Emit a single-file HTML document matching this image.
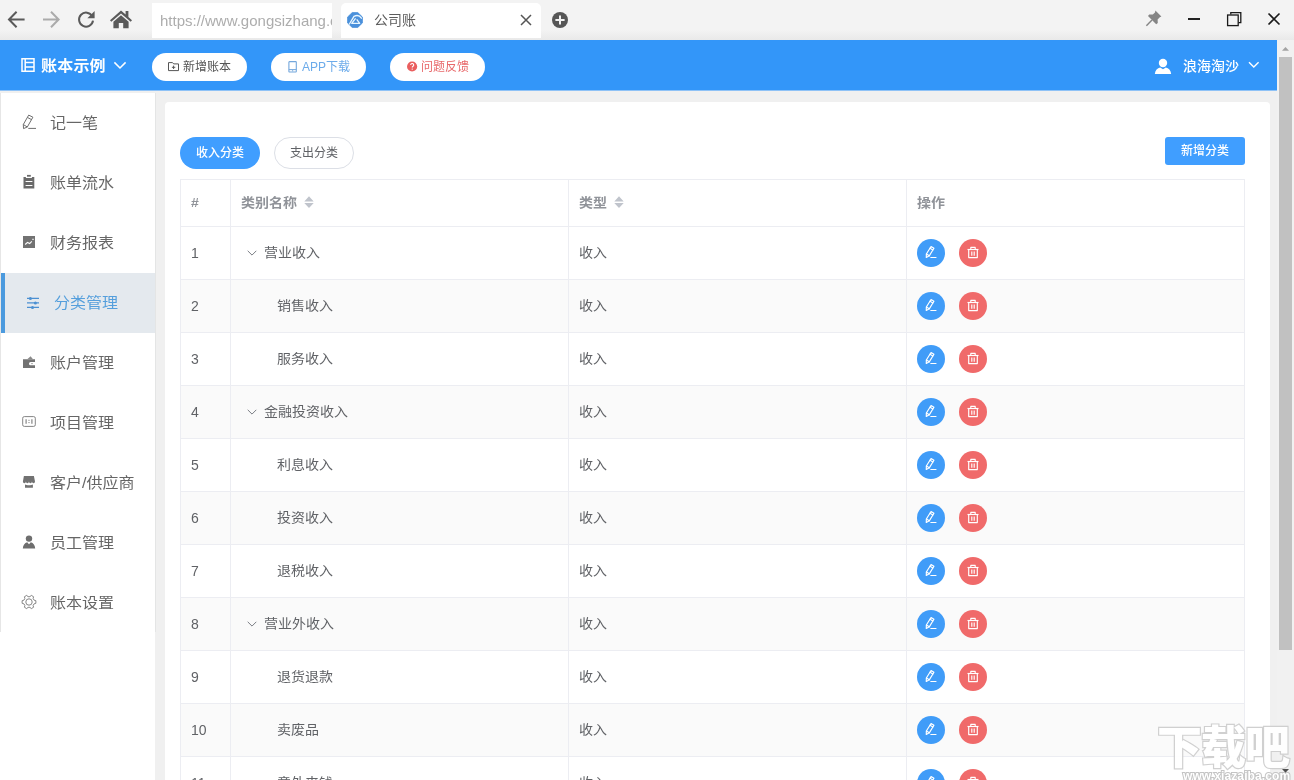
<!DOCTYPE html>
<html lang="zh-CN">
<head>
<meta charset="utf-8">
<title>公司账</title>
<style>
*{box-sizing:border-box;margin:0;padding:0}
html,body{width:1294px;height:780px;overflow:hidden;background:#f0f0f0}
body{position:relative;font-family:"Liberation Sans","Noto Sans CJK SC",sans-serif;color:#606266;font-size:14px}
.abs{position:absolute}
svg{display:block;position:absolute;overflow:visible}
/* browser chrome */
#chrome{left:0;top:0;width:1294px;height:40px;background:linear-gradient(#f3f3f3 0,#f3f3f3 30px,#e9e9e9 40px)}
#url{left:152px;top:3px;width:180px;height:35px;background:#fff;overflow:hidden;white-space:nowrap;font-size:15px;line-height:35px;color:#adadad;padding-left:8px}
#tab{left:341px;top:3px;width:200px;height:35px;background:#fff;border-radius:5px 5px 0 0}
#tabtitle{left:374px;top:3px;height:35px;line-height:35px;font-size:14px;color:#5c5c5c;transform:scaleY(.94)}
/* header */
#hdr{left:0;top:40px;width:1277px;height:51px;background:linear-gradient(#3396f9 0,#3396f9 50px,#8fc2f6 50px,#8fc2f6 51px)}
#brand{left:41px;top:41px;height:50px;line-height:50px;font-size:16px;font-weight:bold;letter-spacing:.2px;transform:scaleY(.95);color:#fff;white-space:nowrap}
.pill{top:53px;height:28px;width:95px;border-radius:14px;background:#fff;font-size:12px;line-height:28px;white-space:nowrap}
.pill span{position:absolute;top:0}
#user{left:1183px;top:41px;height:50px;line-height:50px;font-size:14px;font-weight:500;color:#fff;transform:scaleY(.94);white-space:nowrap}
/* scrollbar */
#sb{left:1277px;top:40px;width:17px;height:740px;background:#f1f1f1}
#thumb{left:1279px;top:57px;width:13px;height:593px;background:#c1c1c1}
/* sidebar */
#side{left:0;top:93px;width:155px;height:687px;background:#fff}
#sideline{left:0;top:93px;width:1px;height:539px;background:#e6e6e6}
#sideline2{left:155px;top:93px;width:1px;height:539px;background:#e4e5e5}
.mi{left:0;width:155px;height:60px;line-height:60px;font-size:16px;color:#666;white-space:nowrap}
.mi span{position:absolute;left:50px;top:0;transform:scaleY(.92)}
.mi.on{left:1px;width:154px;background:#e4e9ee;border-left:4px solid #4b9ade;color:#559fdc}
.mi.on span{left:49px}
/* card */
#card{left:165px;top:102px;width:1105px;height:700px;background:#fff;border-radius:4px}
.tabbtn{top:137px;width:80px;height:32px;border-radius:16px;font-size:12px;line-height:32px;text-align:center}
#addbtn{left:1165px;top:137px;width:80px;height:28px;border-radius:3px;background:#409eff;color:#fff;font-size:12px;font-weight:500;line-height:28px;text-align:center}
/* table */
#tbl{left:180px;top:179px;width:1065px;height:620px;border-left:1px solid #ecedf2;border-top:1px solid #ecedf2}
.row{left:181px;width:1064px;height:53px;border-bottom:1px solid #ecedf2}
.row.st{background:#fafafa}
.vl{top:180px;width:1px;height:600px;background:#ecedf2}
.c{position:absolute;top:-1px;height:52px;line-height:52px;transform:scaleY(.92);white-space:nowrap;font-size:14px;color:#606266}
.th{position:absolute;top:179px;height:46px;line-height:46px;transform:scaleY(.92);font-size:14px;font-weight:bold;color:#909399;white-space:nowrap}
.ed,.de{position:absolute;top:12px;width:28px;height:28px;border-radius:50%}
.ed{left:736px;background:#409cf8}
.de{left:778px;background:#f06a6a}
#wm1{left:1157px;top:713px;width:140px;height:64px;line-height:64px;font-size:45px;font-weight:900;letter-spacing:-1px;color:#fff;-webkit-text-stroke:2.4px #cdcdcd;paint-order:stroke fill;white-space:nowrap;font-family:"Noto Sans CJK SC",sans-serif;opacity:.92}
#wm2{left:1183px;top:767px;font-size:12px;line-height:18px;font-weight:bold;color:#fff;-webkit-text-stroke:2px #c4c4c4;paint-order:stroke fill;white-space:nowrap;letter-spacing:.1px}
.c.n{transform:none;top:0}
</style>
</head>
<body>
<div id="root" style="position:absolute;left:0;top:0;width:1294px;height:780px;overflow:hidden;will-change:transform">
<!-- browser chrome -->
<div id="chrome" class="abs"></div>
<div id="url" class="abs">https://www.gongsizhang.com</div>
<div id="tab" class="abs"></div>
<div id="tabtitle" class="abs">公司账</div>

<!-- header -->
<div id="hdr" class="abs"></div>
<div id="brand" class="abs">账本示例</div>
<div class="pill abs" style="left:152px;color:#555"><span style="left:31px">新增账本</span></div>
<div class="pill abs" style="left:271px;color:#6cabea"><span style="left:31px">APP下载</span></div>
<div class="pill abs" style="left:390px;color:#e8696b"><span style="left:31px">问题反馈</span></div>
<div id="user" class="abs">浪海淘沙</div>

<!-- scrollbar -->
<div id="sb" class="abs"></div>
<div id="thumb" class="abs"></div>

<!-- sidebar -->
<div id="side" class="abs"></div>
<div id="sideline" class="abs"></div>
<div id="sideline2" class="abs"></div>
<div class="mi abs" style="top:93px"><span>记一笔</span></div>
<div class="mi abs" style="top:153px"><span>账单流水</span></div>
<div class="mi abs" style="top:213px"><span>财务报表</span></div>
<div class="mi on abs" style="top:273px"><span>分类管理</span></div>
<div class="mi abs" style="top:333px"><span>账户管理</span></div>
<div class="mi abs" style="top:393px"><span>项目管理</span></div>
<div class="mi abs" style="top:453px"><span>客户/供应商</span></div>
<div class="mi abs" style="top:513px"><span>员工管理</span></div>
<div class="mi abs" style="top:573px"><span>账本设置</span></div>

<!-- card -->
<div id="card" class="abs"></div>
<div class="tabbtn abs" style="left:180px;background:#409eff;color:#fff;font-weight:500">收入分类</div>
<div class="tabbtn abs" style="left:274px;background:#fff;border:1px solid #dcdfe6;color:#606266;line-height:30px">支出分类</div>
<div id="addbtn" class="abs">新增分类</div>

<!-- table -->
<div id="tbl" class="abs"></div>
<div class="abs" style="left:181px;top:226px;width:1064px;height:1px;background:#ecedf2"></div>
<div class="th" style="left:191px">#</div>
<div class="th" style="left:241px">类别名称</div>
<div class="th" style="left:579px">类型</div>
<div class="th" style="left:917px">操作</div>
<svg width="10" height="12" style="left:304px;top:196px"><path d="M5 .2L9.700 5.400H.3zM.3 6.900h9.400L5 12z" fill="#c0c4cc"/></svg>
<svg width="10" height="12" style="left:614px;top:196px"><path d="M5 .2L9.700 5.400H.3zM.3 6.900h9.400L5 12z" fill="#c0c4cc"/></svg>
<!--ROWS-->
<div class="row abs" style="top:227px"><div class="c n" style="left:10px">1</div><svg width="10" height="6" viewBox="0 0 10 6" style="left:66px;top:23px"><path d="M.7.8L5 5.1 9.3.8" fill="none" stroke="#7a7d84" stroke-width="1"/></svg><div class="c" style="left:83px">营业收入</div><div class="c" style="left:398px">收入</div><div class="ed"><svg width="28" height="28" viewBox="0 0 28 28" style="left:0;top:0"><g fill="none" stroke="#fff" stroke-width="1.15" stroke-linejoin="round" stroke-linecap="round"><path d="M14.05 7.5l2.9 1.750-4.680 7.600-3 1.650.1-3.450z"/><path d="M13 9.200l2.900 1.750M9.400 15.050l2.870 1.800"/><path d="M13.800 18.450h5.200"/></g></svg></div><div class="de"><svg width="28" height="28" viewBox="0 0 28 28" style="left:0;top:0"><g fill="none" stroke="#fff" stroke-width="1.15" stroke-linejoin="round"><path d="M8.500 10.500h11"/><path d="M9.700 10.500v8.100h8.600v-8.100"/><path d="M11.800 10.500v-2.100h4.400v2.100"/><path d="M12.800 12.500v4.200M15.200 12.500v4.200"/></g></svg></div></div>
<div class="row abs st" style="top:280px"><div class="c n" style="left:10px">2</div><div class="c" style="left:96px">销售收入</div><div class="c" style="left:398px">收入</div><div class="ed"><svg width="28" height="28" viewBox="0 0 28 28" style="left:0;top:0"><g fill="none" stroke="#fff" stroke-width="1.15" stroke-linejoin="round" stroke-linecap="round"><path d="M14.05 7.5l2.9 1.750-4.680 7.600-3 1.650.1-3.450z"/><path d="M13 9.200l2.900 1.750M9.400 15.050l2.870 1.800"/><path d="M13.800 18.450h5.200"/></g></svg></div><div class="de"><svg width="28" height="28" viewBox="0 0 28 28" style="left:0;top:0"><g fill="none" stroke="#fff" stroke-width="1.15" stroke-linejoin="round"><path d="M8.500 10.500h11"/><path d="M9.700 10.500v8.100h8.600v-8.100"/><path d="M11.800 10.500v-2.100h4.400v2.100"/><path d="M12.800 12.500v4.200M15.200 12.500v4.200"/></g></svg></div></div>
<div class="row abs" style="top:333px"><div class="c n" style="left:10px">3</div><div class="c" style="left:96px">服务收入</div><div class="c" style="left:398px">收入</div><div class="ed"><svg width="28" height="28" viewBox="0 0 28 28" style="left:0;top:0"><g fill="none" stroke="#fff" stroke-width="1.15" stroke-linejoin="round" stroke-linecap="round"><path d="M14.05 7.5l2.9 1.750-4.680 7.600-3 1.650.1-3.450z"/><path d="M13 9.200l2.900 1.750M9.400 15.050l2.870 1.800"/><path d="M13.800 18.450h5.200"/></g></svg></div><div class="de"><svg width="28" height="28" viewBox="0 0 28 28" style="left:0;top:0"><g fill="none" stroke="#fff" stroke-width="1.15" stroke-linejoin="round"><path d="M8.500 10.500h11"/><path d="M9.700 10.500v8.100h8.600v-8.100"/><path d="M11.800 10.500v-2.100h4.400v2.100"/><path d="M12.800 12.500v4.200M15.200 12.500v4.200"/></g></svg></div></div>
<div class="row abs st" style="top:386px"><div class="c n" style="left:10px">4</div><svg width="10" height="6" viewBox="0 0 10 6" style="left:66px;top:23px"><path d="M.7.8L5 5.1 9.3.8" fill="none" stroke="#7a7d84" stroke-width="1"/></svg><div class="c" style="left:83px">金融投资收入</div><div class="c" style="left:398px">收入</div><div class="ed"><svg width="28" height="28" viewBox="0 0 28 28" style="left:0;top:0"><g fill="none" stroke="#fff" stroke-width="1.15" stroke-linejoin="round" stroke-linecap="round"><path d="M14.05 7.5l2.9 1.750-4.680 7.600-3 1.650.1-3.450z"/><path d="M13 9.200l2.900 1.750M9.400 15.050l2.870 1.800"/><path d="M13.800 18.450h5.200"/></g></svg></div><div class="de"><svg width="28" height="28" viewBox="0 0 28 28" style="left:0;top:0"><g fill="none" stroke="#fff" stroke-width="1.15" stroke-linejoin="round"><path d="M8.500 10.500h11"/><path d="M9.700 10.500v8.100h8.600v-8.100"/><path d="M11.800 10.500v-2.100h4.400v2.100"/><path d="M12.800 12.500v4.200M15.200 12.500v4.200"/></g></svg></div></div>
<div class="row abs" style="top:439px"><div class="c n" style="left:10px">5</div><div class="c" style="left:96px">利息收入</div><div class="c" style="left:398px">收入</div><div class="ed"><svg width="28" height="28" viewBox="0 0 28 28" style="left:0;top:0"><g fill="none" stroke="#fff" stroke-width="1.15" stroke-linejoin="round" stroke-linecap="round"><path d="M14.05 7.5l2.9 1.750-4.680 7.600-3 1.650.1-3.450z"/><path d="M13 9.200l2.900 1.750M9.400 15.050l2.870 1.800"/><path d="M13.800 18.450h5.200"/></g></svg></div><div class="de"><svg width="28" height="28" viewBox="0 0 28 28" style="left:0;top:0"><g fill="none" stroke="#fff" stroke-width="1.15" stroke-linejoin="round"><path d="M8.500 10.500h11"/><path d="M9.700 10.500v8.100h8.600v-8.100"/><path d="M11.800 10.500v-2.100h4.400v2.100"/><path d="M12.800 12.500v4.200M15.200 12.500v4.200"/></g></svg></div></div>
<div class="row abs st" style="top:492px"><div class="c n" style="left:10px">6</div><div class="c" style="left:96px">投资收入</div><div class="c" style="left:398px">收入</div><div class="ed"><svg width="28" height="28" viewBox="0 0 28 28" style="left:0;top:0"><g fill="none" stroke="#fff" stroke-width="1.15" stroke-linejoin="round" stroke-linecap="round"><path d="M14.05 7.5l2.9 1.750-4.680 7.600-3 1.650.1-3.450z"/><path d="M13 9.200l2.900 1.750M9.400 15.050l2.870 1.800"/><path d="M13.800 18.450h5.200"/></g></svg></div><div class="de"><svg width="28" height="28" viewBox="0 0 28 28" style="left:0;top:0"><g fill="none" stroke="#fff" stroke-width="1.15" stroke-linejoin="round"><path d="M8.500 10.500h11"/><path d="M9.700 10.500v8.100h8.600v-8.100"/><path d="M11.800 10.500v-2.100h4.400v2.100"/><path d="M12.800 12.500v4.200M15.200 12.500v4.200"/></g></svg></div></div>
<div class="row abs" style="top:545px"><div class="c n" style="left:10px">7</div><div class="c" style="left:96px">退税收入</div><div class="c" style="left:398px">收入</div><div class="ed"><svg width="28" height="28" viewBox="0 0 28 28" style="left:0;top:0"><g fill="none" stroke="#fff" stroke-width="1.15" stroke-linejoin="round" stroke-linecap="round"><path d="M14.05 7.5l2.9 1.750-4.680 7.600-3 1.650.1-3.450z"/><path d="M13 9.200l2.900 1.750M9.400 15.050l2.870 1.800"/><path d="M13.800 18.450h5.200"/></g></svg></div><div class="de"><svg width="28" height="28" viewBox="0 0 28 28" style="left:0;top:0"><g fill="none" stroke="#fff" stroke-width="1.15" stroke-linejoin="round"><path d="M8.500 10.500h11"/><path d="M9.700 10.500v8.100h8.600v-8.100"/><path d="M11.800 10.500v-2.100h4.400v2.100"/><path d="M12.800 12.500v4.200M15.200 12.500v4.200"/></g></svg></div></div>
<div class="row abs st" style="top:598px"><div class="c n" style="left:10px">8</div><svg width="10" height="6" viewBox="0 0 10 6" style="left:66px;top:23px"><path d="M.7.8L5 5.1 9.3.8" fill="none" stroke="#7a7d84" stroke-width="1"/></svg><div class="c" style="left:83px">营业外收入</div><div class="c" style="left:398px">收入</div><div class="ed"><svg width="28" height="28" viewBox="0 0 28 28" style="left:0;top:0"><g fill="none" stroke="#fff" stroke-width="1.15" stroke-linejoin="round" stroke-linecap="round"><path d="M14.05 7.5l2.9 1.750-4.680 7.600-3 1.650.1-3.450z"/><path d="M13 9.200l2.900 1.750M9.400 15.050l2.870 1.800"/><path d="M13.800 18.450h5.200"/></g></svg></div><div class="de"><svg width="28" height="28" viewBox="0 0 28 28" style="left:0;top:0"><g fill="none" stroke="#fff" stroke-width="1.15" stroke-linejoin="round"><path d="M8.500 10.500h11"/><path d="M9.700 10.500v8.100h8.600v-8.100"/><path d="M11.800 10.500v-2.100h4.400v2.100"/><path d="M12.800 12.500v4.200M15.200 12.500v4.200"/></g></svg></div></div>
<div class="row abs" style="top:651px"><div class="c n" style="left:10px">9</div><div class="c" style="left:96px">退货退款</div><div class="c" style="left:398px">收入</div><div class="ed"><svg width="28" height="28" viewBox="0 0 28 28" style="left:0;top:0"><g fill="none" stroke="#fff" stroke-width="1.15" stroke-linejoin="round" stroke-linecap="round"><path d="M14.05 7.5l2.9 1.750-4.680 7.600-3 1.650.1-3.450z"/><path d="M13 9.200l2.900 1.750M9.400 15.050l2.870 1.800"/><path d="M13.800 18.450h5.200"/></g></svg></div><div class="de"><svg width="28" height="28" viewBox="0 0 28 28" style="left:0;top:0"><g fill="none" stroke="#fff" stroke-width="1.15" stroke-linejoin="round"><path d="M8.500 10.500h11"/><path d="M9.700 10.500v8.100h8.600v-8.100"/><path d="M11.800 10.500v-2.100h4.400v2.100"/><path d="M12.800 12.500v4.200M15.200 12.500v4.200"/></g></svg></div></div>
<div class="row abs st" style="top:704px"><div class="c n" style="left:10px">10</div><div class="c" style="left:96px">卖废品</div><div class="c" style="left:398px">收入</div><div class="ed"><svg width="28" height="28" viewBox="0 0 28 28" style="left:0;top:0"><g fill="none" stroke="#fff" stroke-width="1.15" stroke-linejoin="round" stroke-linecap="round"><path d="M14.05 7.5l2.9 1.750-4.680 7.600-3 1.650.1-3.450z"/><path d="M13 9.200l2.900 1.750M9.400 15.050l2.870 1.800"/><path d="M13.800 18.450h5.200"/></g></svg></div><div class="de"><svg width="28" height="28" viewBox="0 0 28 28" style="left:0;top:0"><g fill="none" stroke="#fff" stroke-width="1.15" stroke-linejoin="round"><path d="M8.500 10.500h11"/><path d="M9.700 10.500v8.100h8.600v-8.100"/><path d="M11.800 10.500v-2.100h4.400v2.100"/><path d="M12.800 12.500v4.200M15.200 12.500v4.200"/></g></svg></div></div>
<div class="row abs" style="top:757px"><div class="c n" style="left:10px">11</div><div class="c" style="left:96px">意外来钱</div><div class="c" style="left:398px">收入</div><div class="ed"><svg width="28" height="28" viewBox="0 0 28 28" style="left:0;top:0"><g fill="none" stroke="#fff" stroke-width="1.15" stroke-linejoin="round" stroke-linecap="round"><path d="M14.05 7.5l2.9 1.750-4.680 7.600-3 1.650.1-3.450z"/><path d="M13 9.200l2.900 1.750M9.400 15.050l2.870 1.800"/><path d="M13.800 18.450h5.200"/></g></svg></div><div class="de"><svg width="28" height="28" viewBox="0 0 28 28" style="left:0;top:0"><g fill="none" stroke="#fff" stroke-width="1.15" stroke-linejoin="round"><path d="M8.500 10.500h11"/><path d="M9.700 10.500v8.100h8.600v-8.100"/><path d="M11.800 10.500v-2.100h4.400v2.100"/><path d="M12.800 12.500v4.200M15.200 12.500v4.200"/></g></svg></div></div>
<!--/ROWS-->
<div class="vl abs" style="left:230px"></div>
<div class="vl abs" style="left:568px"></div>
<div class="vl abs" style="left:906px"></div>
<div class="vl abs" style="left:1244px"></div>
<div id="wm1" class="abs">下载吧</div>
<div id="wm2" class="abs">www.xiazaiba.com</div>
<!--ICONS-->
<!-- chrome icons -->
<svg width="20" height="20" style="left:6px;top:10px"><path d="M18.6 9.5H3.2M10.6 1.8L3 9.5l7.6 7.7" fill="none" stroke="#5a5a5a" stroke-width="2"/></svg>
<svg width="20" height="20" style="left:41px;top:10px"><path d="M2 9.5h15.4M10 1.8l7.6 7.7-7.6 7.7" fill="none" stroke="#ababab" stroke-width="2"/></svg>
<svg width="20" height="20" style="left:76px;top:10px"><path d="M16.2 6.2A7 7 0 1 0 17 10.6" fill="none" stroke="#5a5a5a" stroke-width="2"/><path d="M18.6 1v7.2h-7.2z" fill="#5a5a5a"/></svg>
<svg width="24" height="20" style="left:109px;top:9px"><path d="M12 1.6L1 11.2l1.3 1.5L12 4.4l9.7 8.3 1.3-1.5-3.6-3.1V2h-2.8v3.4z" fill="#5a5a5a"/><path d="M12 6.2l-7.6 6.5v6.6h5.4v-5.2h4.4v5.2h5.4v-6.6z" fill="#5a5a5a"/></svg>
<svg width="16" height="16" viewBox="0 0 16 16" style="left:347px;top:12px"><path d="M5.200 .6h5.600l4.600 4.400v6l-4.600 4.400H5.200L.6 11V5z" fill="#4a90db" stroke="#4a90db" stroke-width=".8" stroke-linejoin="round"/><path d="M2.400 12L7 4.300c3-1.500 5.800-.6 7.400 1.900" fill="none" stroke="#e8f6ff" stroke-width="1.300" stroke-linecap="round"/><path d="M8.600 6.300L4.700 11.300h8l-3-4" fill="none" stroke="#e8f6ff" stroke-width="1.300" stroke-linejoin="round"/></svg>
<svg width="12" height="12" style="left:520px;top:14px"><path d="M1 1l10 10M11 1L1 11" fill="none" stroke="#555" stroke-width="1.5"/></svg>
<svg width="16" height="16" style="left:552px;top:12px"><circle cx="8" cy="8" r="8" fill="#565656"/><path d="M8 3.4v9.2M3.4 8h9.2" stroke="#f2f2f2" stroke-width="2"/></svg>
<svg width="18" height="18" style="left:1145px;top:9px"><path d="M10.4 1.6l6 6-1.6.6-2.2 2.2.2 3.6-1.6 1.2L3 7l1.2-1.6 3.6.2L10 3.400z" fill="#858585"/><path d="M7 11L1.400 16.800" stroke="#858585" stroke-width="1.400"/></svg>
<svg width="14" height="4" style="left:1187px;top:17px"><path d="M1 2h12" stroke="#222" stroke-width="2"/></svg>
<svg width="16" height="16" style="left:1226px;top:11px"><path d="M4.800 3.600V1.600h10v10h-2.400" fill="none" stroke="#1a1a1a" stroke-width="1.300"/><rect x="1.600" y="4" width="10.600" height="10.600" fill="none" stroke="#1a1a1a" stroke-width="1.300"/></svg>
<svg width="14" height="14" style="left:1267px;top:12px"><path d="M1.500 1.500l11 11M12.500 1.500l-11 11" fill="none" stroke="#1a1a1a" stroke-width="1.600"/></svg>
<!-- header icons -->
<svg width="14" height="14" style="left:21px;top:58px"><path d="M1 .8h12v12.400H1zM4.200 .8v12.400M4.200 4.600H13M4.200 9H13" fill="none" stroke="#fff" stroke-width="1.500"/></svg>
<svg width="14" height="8" style="left:113px;top:61px"><path d="M1.400 1.400L7 7l5.600-5.600" fill="none" stroke="#fff" stroke-width="1.500"/></svg>
<svg width="12" height="10" style="left:168px;top:62px"><path d="M.5.600h4l1.200 1.300h4.800v6.700H.5z" fill="none" stroke="#555" stroke-width="1"/><path d="M5.600 3.600v3.400M3.900 5.300h3.400" stroke="#555" stroke-width="1"/></svg>
<svg width="10" height="12" style="left:288px;top:61px"><rect x=".9" y=".6" width="7.400" height="10.400" rx=".6" fill="none" stroke="#74a7dc" stroke-width="1.100"/><path d="M.9 8.600h7.400" stroke="#74a7dc" stroke-width="1"/><path d="M4 9.800h1.200" stroke="#74a7dc" stroke-width="1"/></svg>
<svg width="12" height="12" style="left:406px;top:60px"><circle cx="6.100" cy="6.500" r="5.100" fill="#ea5f5f"/><path d="M4.700 5.100a1.500 1.500 0 1 1 2.300 1.200c-.6.400-.8.600-.8 1.300" fill="none" stroke="#fff" stroke-width="1.100"/><circle cx="6.200" cy="9.100" r=".7" fill="#fff"/></svg>
<svg width="18" height="18" style="left:1154px;top:57px"><circle cx="9" cy="6" r="4.200" fill="#fff"/><path d="M.8 17c.4-3.800 2.600-6.200 5.400-6.600L9 12.200l2.800-1.800c2.800.4 5 2.800 5.400 6.600z" fill="#fff"/></svg>
<svg width="12" height="8" style="left:1248px;top:61px"><path d="M1 1.200l4.800 4.800 4.800-4.800" fill="none" stroke="#fff" stroke-width="1.400"/></svg>
<!-- scrollbar arrows -->
<svg width="8" height="4" style="left:1282px;top:47px"><path d="M3.500 0L7 3.800H0z" fill="#a3a3a3"/></svg>
<svg width="8" height="4" style="left:1282px;top:769px"><path d="M0 0h7L3.500 3.800z" fill="#505050"/></svg>
<!-- sidebar icons -->
<svg width="16" height="16" style="left:22px;top:114px"><path d="M6.700 1.100l4.200 2.100L5.300 13l-3.800 1.600-.2-4.100zM5.500 3.500l4.200 2.200M1.300 10.500l4 2.500M6.300 14.400H14" fill="none" stroke="#6e6e6e" stroke-width="1" stroke-linejoin="round"/></svg>
<svg width="14" height="16" style="left:22px;top:174px"><path d="M5 .9h3.800v1.800H5z" fill="#6a6a6a"/><path d="M1.500 3h2.400v1.100h6V3h2.400v11.600H1.500z" fill="#6a6a6a"/><path d="M3.600 7.500h6.800M3.600 11.500h6.800" stroke="#fff" stroke-width="1.100"/></svg>
<svg width="14" height="14" style="left:22px;top:235px"><rect x="1" y="1" width="12" height="12" fill="#727272"/><path d="M3.200 9.500l2.300-2.100 2.200 1.200 2.100-2.300" fill="none" stroke="#fff" stroke-width="1.100"/><path d="M10.200 4.300h1.600" stroke="#fff" stroke-width="1"/></svg>
<svg width="14" height="12" style="left:26px;top:296px"><path d="M1 2.400h12M1 6.900h12M1 11.400h12" stroke="#4b90d2" stroke-width="1.100"/><circle cx="4.400" cy="2.400" r="1.500" fill="#4b90d2"/><circle cx="9.400" cy="6.900" r="1.500" fill="#4b90d2"/><circle cx="6.500" cy="11.400" r="1.500" fill="#4b90d2"/></svg>
<svg width="14" height="14" style="left:22px;top:355px"><path d="M1 4.200h12v2.900H8.600a1.600 1.600 0 0 0 0 3.200H13V13H1z" fill="#727272"/><path d="M5.200 4.200L8.600 1.200 11 4.200z" fill="#8a8a8a"/><circle cx="10" cy="8.600" r=".7" fill="#727272"/></svg>
<svg width="16" height="12" style="left:21px;top:415px"><rect x="1.700" y="1.600" width="12.600" height="9.800" rx="1.600" fill="none" stroke="#858585" stroke-width="1"/><path d="M5.100 4.200v4.600M10.900 4.200v4.600" stroke="#858585" stroke-width="1.200"/><path d="M7.400 5.300h1.200M7.400 7.600h1.200" stroke="#858585" stroke-width="1"/></svg>
<svg width="14" height="14" style="left:22px;top:475px"><path d="M1.900 1H11.900L13 6.600a1.510 1.700 0 0 1-3.025 0a1.510 1.700 0 0 1-3.025 0a1.510 1.700 0 0 1-3.025 0a1.510 1.700 0 0 1-3.025 0z" fill="#727272"/><path d="M3 9.400c1.600 1.100 6.300 1.100 7.900 0V12.800H3z" fill="#727272"/></svg>
<svg width="14" height="14" style="left:22px;top:534px"><circle cx="7" cy="4.600" r="3.200" fill="#6e6e6e"/><path d="M.8 14.600c.2-3.400 1.800-5.600 4.400-6.300L7 10.200l1.800-1.900c2.600.7 4.200 2.900 4.400 6.300z" fill="#6e6e6e"/></svg>
<svg width="16" height="16" style="left:21px;top:594px"><path d="M13.07 6.15 L14.87 6.66 L14.87 9.34 L13.07 9.85 L12.14 11.47 L12.59 13.28 L10.28 14.62 L8.94 13.32 L7.06 13.32 L5.72 14.62 L3.41 13.28 L3.86 11.47 L2.93 9.85 L1.13 9.34 L1.13 6.66 L2.93 6.15 L3.86 4.53 L3.41 2.72 L5.72 1.38 L7.06 2.68 L8.94 2.68 L10.28 1.38 L12.59 2.72 L12.14 4.53Z" stroke-linejoin="round" fill="none" stroke="#858585" stroke-width="1"/><circle cx="8" cy="8" r="3.200" fill="none" stroke="#858585" stroke-width="1"/></svg>
<!--/ICONS-->
</div>
</body>
</html>
